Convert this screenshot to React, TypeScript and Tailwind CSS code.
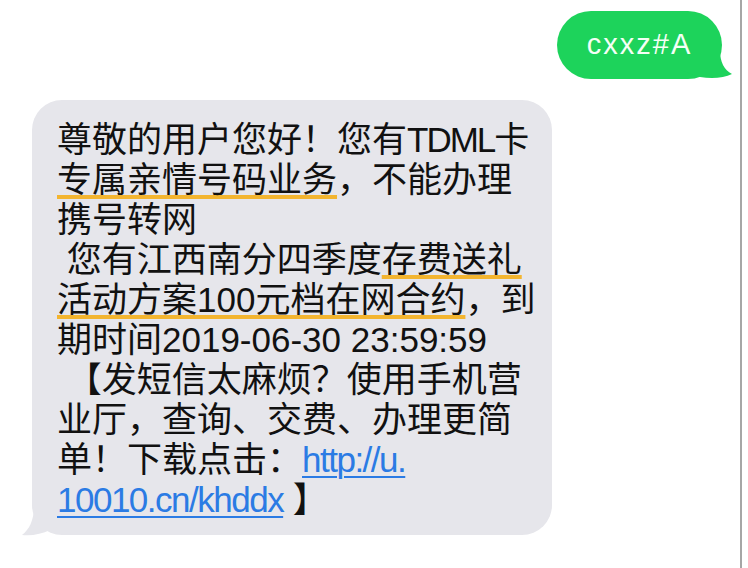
import React from 'react';

const mark =
  'underline decoration-[#f3b530] decoration-[4px] underline-offset-[3px] [text-decoration-skip-ink:none]';
const link =
  'tracking-[-1.5px] text-[#2b7be4] underline decoration-[#2b7be4] decoration-[2px] underline-offset-[4px]';

const GreenTail = () => (
  <svg className="absolute right-[-14px] bottom-[-1px]" width="56" height="36" viewBox="0 0 56 36">
    <path d="M40 6 C40 18 44 26 52 30 C44 34 32 35 20 33 L0 26 L0 6 Z" fill="#1dd35b" />
  </svg>
);

const GreyTail = () => (
  <svg className="absolute left-[-12px] bottom-[-2px]" width="52" height="36" viewBox="0 0 52 36">
    <path d="M14 5 C14 18 10 28 2 34 C12 35 22 33 30 29 L50 20 L50 5 Z" fill="#e6e6eb" />
  </svg>
);

export default function App() {
  return (
    <div className="flex h-[568px] w-[748px] overflow-hidden bg-white font-['Liberation_Sans','Noto_Sans_CJK_SC',sans-serif]">
      <div className="flex w-[740px] flex-col pt-[11px]">
        {/* sent */}
        <div className="flex justify-end pr-[18px]">
          <div className="relative flex h-[68px] w-[165px] items-center justify-center rounded-[34px] bg-[#1dd35b]">
            <GreenTail />
            <span className="relative text-[29px] tracking-[2px] text-[#f4fff6]">cxxz#A</span>
          </div>
        </div>

        {/* received */}
        <div className="relative ml-[32px] mt-[21px] w-[520px] rounded-[30px] bg-[#e6e6eb] pb-[15px] pl-[25px] pt-[20px]">
          <GreyTail />
          <div className="relative whitespace-pre text-[35px] leading-[40px] text-[#111]">
            <div>
              尊敬的用户您好！您有<span className="tracking-[-2px]">TDML</span>卡
            </div>
            <div>
              <span className={mark}>专属亲情号码业务</span>，不能办理
            </div>
            <div>携号转网</div>
            <div>
              {' 您有江西南分四季度'}
              <span className={mark}>存费送礼</span>
            </div>
            <div>
              <span className={mark}>活动方案100元档在网合约</span>，到
            </div>
            <div>期时间2019-06-30 23:59:59</div>
            <div>{' 【发短信太麻烦？使用手机营'}</div>
            <div>业厅，查询、交费、办理更简</div>
            <div>
              单！下载点击：<span className={link}>http://u.</span>
            </div>
            <div>
              <span className={link}>10010.cn/khddx</span> 】
            </div>
          </div>
        </div>
      </div>
      <div className="w-[2px] bg-[#a6a6a6]" />
      <div className="flex-1" />
    </div>
  );
}
